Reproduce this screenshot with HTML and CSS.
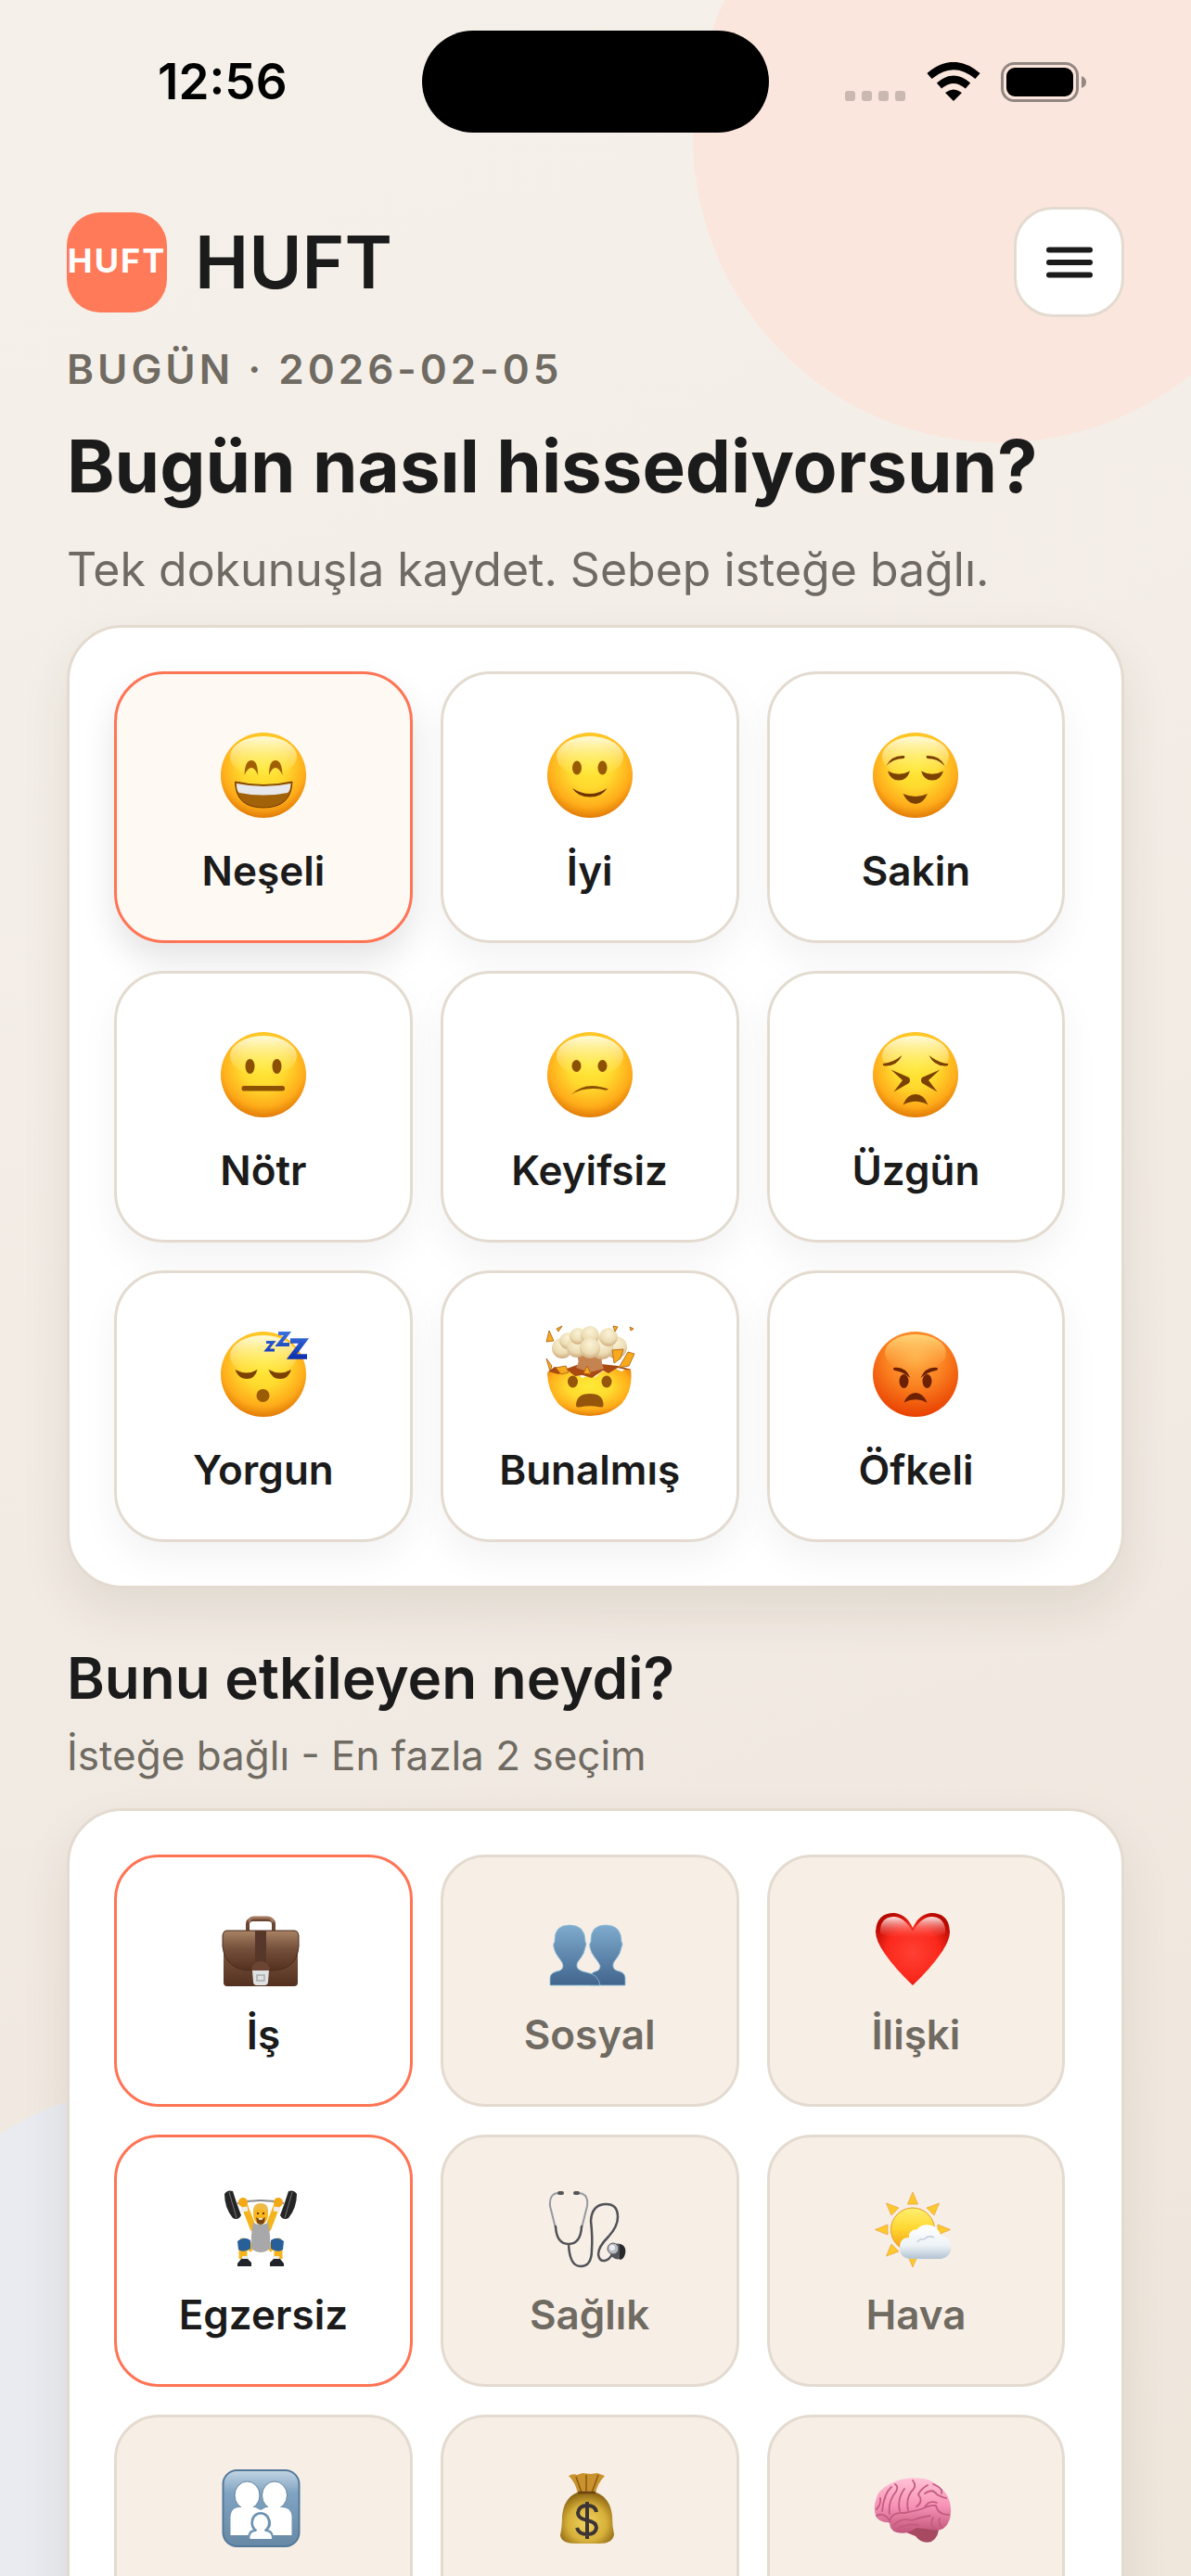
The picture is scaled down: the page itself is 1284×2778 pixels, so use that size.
FILE: index.html
```html
<!DOCTYPE html>
<html lang="tr">
<head>
<meta charset="utf-8">
<meta name="viewport" content="width=device-width, initial-scale=1">
<title>HUFT</title>
<link rel="stylesheet" href="styles.css">
</head>
<body>
<svg class="defs" aria-hidden="true">
  <defs>
    <radialGradient id="skin" cx=".5" cy=".38" r=".63">
      <stop offset="0" stop-color="#ffe936"/><stop offset=".42" stop-color="#ffda2e"/><stop offset=".78" stop-color="#ffac1a"/><stop offset="1" stop-color="#df7806"/>
    </radialGradient>
    <radialGradient id="rage" cx=".5" cy=".3" r=".72">
      <stop offset="0" stop-color="#ffae45"/><stop offset=".5" stop-color="#fa7f1f"/><stop offset="1" stop-color="#e83c00"/>
    </radialGradient>
    <linearGradient id="shine" x1="0" y1="0" x2="0" y2="1">
      <stop offset="0" stop-color="#fffde6" stop-opacity=".95"/><stop offset="1" stop-color="#fff27a" stop-opacity="0"/>
    </linearGradient>
    <linearGradient id="rageshine" x1="0" y1="0" x2="0" y2="1">
      <stop offset="0" stop-color="#ffdf80" stop-opacity=".9"/><stop offset="1" stop-color="#ffb050" stop-opacity="0"/>
    </linearGradient>
    <linearGradient id="zed" x1="0" y1="0" x2="0" y2="32" gradientUnits="userSpaceOnUse">
      <stop offset="0" stop-color="#3f78e0"/><stop offset="1" stop-color="#0a2cb0"/>
    </linearGradient>
    <radialGradient id="smoke" cx=".5" cy=".3" r=".75">
      <stop offset="0" stop-color="#fbf3d6"/><stop offset=".6" stop-color="#ecdcb4"/><stop offset="1" stop-color="#c9a070"/>
    </radialGradient>
    <linearGradient id="leather" x1="0" y1="0" x2="0" y2="1">
      <stop offset="0" stop-color="#a98364"/><stop offset=".45" stop-color="#75503b"/><stop offset="1" stop-color="#53301f"/>
    </linearGradient>
    <linearGradient id="bust" x1="0" y1="0" x2="0" y2="1">
      <stop offset="0" stop-color="#7fabce"/><stop offset="1" stop-color="#41648c"/>
    </linearGradient>
    <radialGradient id="heart" cx=".5" cy=".55" r=".6">
      <stop offset="0" stop-color="#ff4034"/><stop offset=".6" stop-color="#fb281c"/><stop offset="1" stop-color="#b80800"/>
    </radialGradient>
    <linearGradient id="heartshine" x1="0" y1="0" x2="0" y2="1">
      <stop offset="0" stop-color="#fff" stop-opacity=".9"/><stop offset="1" stop-color="#ff6a60" stop-opacity="0"/>
    </linearGradient>
    <linearGradient id="sun" x1="0" y1="0" x2="0" y2="1">
      <stop offset="0" stop-color="#ffef70"/><stop offset=".45" stop-color="#ffd934"/><stop offset="1" stop-color="#f79a10"/>
    </linearGradient>
    <linearGradient id="cloud" x1="0" y1="0" x2="0" y2="1">
      <stop offset="0" stop-color="#fff"/><stop offset=".6" stop-color="#eef3f7"/><stop offset="1" stop-color="#b3c3d2"/>
    </linearGradient>
    <linearGradient id="sign" x1="0" y1="0" x2="0" y2="1">
      <stop offset="0" stop-color="#c3d5e3"/><stop offset=".3" stop-color="#7fa3c2"/><stop offset="1" stop-color="#6889a5"/>
    </linearGradient>
    <radialGradient id="sack" cx=".5" cy=".6" r=".6">
      <stop offset="0" stop-color="#f0d45c"/><stop offset=".6" stop-color="#d6b03a"/><stop offset="1" stop-color="#8d6512"/>
    </radialGradient>
    <linearGradient id="brain" x1="0" y1="0" x2="0" y2="1">
      <stop offset="0" stop-color="#ffc3d6"/><stop offset=".5" stop-color="#f793b6"/><stop offset="1" stop-color="#c0567a"/>
    </linearGradient>
    <g id="face">
      <circle cx="48" cy="48" r="46" fill="url(#skin)"/>
      <ellipse cx="48" cy="28" rx="36" ry="22" fill="url(#shine)"/>
    </g>
  </defs>
</svg>

<div class="screen">
  <div class="blob blob-peach"></div>
  <div class="blob blob-blue"></div>

  <div class="statusbar">
    <span class="clock">12:56</span>
    <span class="island"></span>
    <span class="indicators">
      <svg width="66" height="43" viewBox="0 0 66 43" fill="#c9b9b1" aria-hidden="true"><rect y="31" width="11" height="11" rx="3"/><rect x="18" y="31" width="11" height="11" rx="3"/><rect x="36" y="31" width="11" height="11" rx="3"/><rect x="54" y="31" width="11" height="11" rx="3"/></svg>
      <svg width="58" height="43" viewBox="0 0 58 43" aria-hidden="true"><path d="M29 42 20 33Q29 26 38 33Z"/><path d="M13.500 25.500Q29 12 44.500 25.500" fill="none" stroke="#000" stroke-width="8"/><path d="M3 15Q29-7 55 15" fill="none" stroke="#000" stroke-width="8"/></svg>
      <svg width="92" height="43" viewBox="0 0 92 43" aria-hidden="true"><rect x="1.500" y="1.500" width="81" height="40" rx="13" fill="none" stroke="#938782" stroke-width="3"/><rect x="6" y="6" width="72" height="31" rx="9"/><path d="M87 15q5 2 5 6.500T87 28z" fill="#938782"/></svg>
    </span>
  </div>

  <main class="page">
    <header class="topbar">
      <span class="logo">HUFT</span>
      <span class="brand">HUFT</span>
      <button class="menu" type="button" aria-label="Menü">
        <svg width="50" height="36" viewBox="0 0 50 36" stroke="#1b1b1b" stroke-width="6" stroke-linecap="round" aria-hidden="true"><path d="M3 4.500h44M3 18h44M3 31.500h44"/></svg>
      </button>
    </header>
    <p class="eyebrow">BUGÜN · 2026-02-05</p>
    <h1>Bugün nasıl hissediyorsun?</h1>
    <p class="lead">Tek dokunuşla kaydet. Sebep isteğe bağlı.</p>

    <section class="card moods">
      <button class="tile selected" type="button" aria-pressed="true">
        <svg viewBox="0 0 96 96" aria-hidden="true"><use href="#face"/><path d="M27.500 48Q28 32 35 32T42 48Q39 40 35 40T27.500 48ZM54 48Q54 32 61 32T68.500 48Q65 40 61 40T54 48Z" fill="#a05f05"/><path d="M17.500 55Q48 62 79 55Q78 83 48 83T17.500 55Z" fill="#a2620a" stroke="#6d3600" stroke-width="1"/><path d="M19 57Q48 63 77.500 57Q77 65 74 67Q48 72 22 67Q19 65 19 57Z" fill="#e6e8ec"/></svg>
        <span>Neşeli</span>
      </button>
      <button class="tile" type="button" aria-pressed="false">
        <svg viewBox="0 0 96 96" aria-hidden="true"><use href="#face"/><g fill="#985a05"><ellipse cx="34" cy="40" rx="5" ry="7.500"/><ellipse cx="61.500" cy="40" rx="5" ry="7.500"/></g><path d="M29 62Q48 74 66.500 62Q61 71.500 48 71.500T29 62Z" fill="#6f3600"/></svg>
        <span>İyi</span>
      </button>
      <button class="tile" type="button" aria-pressed="false">
        <svg viewBox="0 0 96 96" aria-hidden="true"><use href="#face"/><g fill="#7b4103"><path d="M16.500 38Q22 26 36 27Q37 29 35 30Q24 30 16.500 38ZM79.500 38Q74 26 60 27Q59 29 61 30Q72 30 79.500 38Z"/><path d="M18 43.500Q30 50 42 43.500Q39 53.500 30 53.500T18 43.500ZM54 43.500Q66 50 78 43.500Q75 53.500 66 53.500T54 43.500ZM34.500 68Q48 74 61 68Q56 79 48 79T34.500 68Z"/></g></svg>
        <span>Sakin</span>
      </button>
      <button class="tile" type="button" aria-pressed="false">
        <svg viewBox="0 0 96 96" aria-hidden="true"><use href="#face"/><g fill="#8c5003"><ellipse cx="33.500" cy="39" rx="5" ry="8"/><ellipse cx="62.500" cy="39" rx="5" ry="8"/><rect x="24.500" y="60" width="46.500" height="5.500" rx="2.500"/></g></svg>
        <span>Nötr</span>
      </button>
      <button class="tile" type="button" aria-pressed="false">
        <svg viewBox="0 0 96 96" aria-hidden="true"><use href="#face"/><g fill="#8c5003"><ellipse cx="33.500" cy="38.500" rx="5" ry="6.500"/><ellipse cx="61.500" cy="38.500" rx="5" ry="6.500"/><path d="M27.500 69.500Q43 54 68 63.500Q67 65 64 64.500Q43 60 27.500 69.500Z"/></g></svg>
        <span>Keyifsiz</span>
      </button>
      <button class="tile" type="button" aria-pressed="false">
        <svg viewBox="0 0 96 96" aria-hidden="true"><use href="#face"/><g fill="#7b4103"><path d="M13 36Q24 35 33.500 27Q28 39 15 38.500Q12 38 13 36ZM83 36Q72 35 62.500 27Q68 39 81 38.500Q84 38 83 36Z"/><path d="M21.500 42.500 41 51Q43 54 41 57L24.500 66.500 34 54ZM74.500 42.500 55 51Q53 54 55 57L71.500 66.500 62 54Z"/><path d="M34.500 80.500Q39 69 48 69T61.500 80.500Q48 73 34.500 80.500Z"/></g></svg>
        <span>Üzgün</span>
      </button>
      <button class="tile" type="button" aria-pressed="false">
        <svg viewBox="0 0 96 96" aria-hidden="true"><use href="#face"/><g fill="#7b4103"><path d="M17.500 43Q30 50 41.500 43Q39 53 30 53T17.500 43ZM53.500 43Q66 50 78 43Q75 53 66 53T53.500 43Z"/><ellipse cx="47.500" cy="71" rx="7" ry="7" fill="#9a5c07"/></g><g fill="none" stroke="url(#zed)"><path d="M51 13.500h7.500l-7 8.500H60" stroke-width="3"/><path d="M64 4h10L64.500 16H76" stroke-width="4"/><path d="M77 12h14.500L78.500 29H95" stroke-width="5.500"/></g></svg>
        <span>Yorgun</span>
      </button>
      <button class="tile" type="button" aria-pressed="false">
        <svg viewBox="0 0 96 96" aria-hidden="true"><path d="M2 46 8 43l5 3 6-5 7 5 8 2 6 4 7-3 7 2 7-6 8 1 7-4 6 3 6-3 4 1Q95 65 82 80Q68 93 48 93T14 80Q2 65 2 46Z" fill="url(#skin)"/><path d="M3 45 10 40 20 43 34 38 48 42 60 37 78 39 93 43 86 43 78 41 68 47 62 44 50 52 40 49 32 50 24 44 14 48Z" fill="#a84a12"/><path d="M33 25H62Q59 34 63 42L48 46 33 41Q38 34 33 25Z" fill="#c58350"/><g fill="url(#smoke)"><circle cx="76" cy="19" r="12"/><circle cx="18" cy="20" r="11"/><circle cx="24" cy="12" r="9"/><circle cx="34" cy="19" r="11"/><circle cx="61" cy="20" r="12"/><circle cx="68" cy="8" r="10"/><circle cx="35" cy="7" r="9"/><circle cx="48" cy="6" r="10"/><circle cx="48" cy="20" r="11"/></g><g fill="#f6aa1c" stroke="#ad5b0d" stroke-width=".8"><path d="M4 1 9 12 1 13ZM12-1 18-4 14 2ZM72 22 84 21 81 31 74 36ZM89 24 96 26 90 39 79 41ZM1 31 7 39 5 45ZM11 41 22 39 25 46 17 48ZM41 47 45 39 49 48ZM73-4 78-3 75 2ZM91-3 95-1 92 1Z"/></g><g fill="#95550b"><ellipse cx="29.500" cy="56" rx="5.500" ry="6.500"/><ellipse cx="66" cy="56" rx="5.500" ry="6.500"/><path d="M33 82Q33 69 48 69T62.500 82Q62 84 59 83.500Q48 81 37 83.500Q33 84 33 82Z"/></g></svg>
        <span>Bunalmış</span>
      </button>
      <button class="tile" type="button" aria-pressed="false">
        <svg viewBox="0 0 96 96" aria-hidden="true"><circle cx="48" cy="48" r="46" fill="url(#rage)"/><ellipse cx="48" cy="25" rx="33" ry="20" fill="url(#rageshine)"/><g fill="#6d2003"><path d="M24.500 41Q37 39 42.500 52Q34 45 26 44Q23 43 24.500 41ZM71.500 41Q59 39 53.500 52Q62 45 70 44Q73 43 71.500 41Z"/><ellipse cx="35.500" cy="55.500" rx="5" ry="7.500"/><ellipse cx="60.500" cy="55.500" rx="5" ry="7.500"/><path d="M35.500 78.500Q40 68 48 68T60.500 78.500Q48 72 35.500 78.500Z"/></g></svg>
        <span>Öfkeli</span>
      </button>
    </section>

    <section class="reasons">
      <h2>Bunu etkileyen neydi?</h2>
      <p class="hint">İsteğe bağlı - En fazla 2 seçim</p>
      <div class="card">
        <button class="tile selected" type="button" aria-pressed="true">
          <svg viewBox="0 0 84 84" aria-hidden="true"><path d="M25 23V16Q25 11 31 11H47Q53 11 53 16V23" fill="none" stroke="#6a4533" stroke-width="4"/><path d="M27 14Q26 9 32 9H46Q52 9 52 14" fill="none" stroke="#a2785d" stroke-width="3"/><rect x="-1" y="23" width="80" height="60" rx="4" fill="url(#leather)"/><path d="M-2 40Q1 66 30 66H50Q78 66 80 40V28Q79 23 76 23H2Q-1 23-2 28Z" fill="url(#leather)" stroke="#4b2b1d" stroke-width="1"/><path d="M33 23h12v38H33z" fill="#56372a"/><path d="M29 66Q30 56 39 56T49 66Z" fill="#6b4433"/><path d="M30 66h18l-1 12q0 4-4 4h-8q-4 0-4-4Z" fill="#dfe1e2"/><path d="M35 71h8v6h-8z" fill="none" stroke="#a9abad" stroke-width="1.500"/></svg>
          <span>İş</span>
        </button>
        <button class="tile" type="button" aria-pressed="false">
          <svg viewBox="0 0 84 84" aria-hidden="true"><g fill="url(#bust)" stroke="#8fc0dc" stroke-width=".8"><path d="M42 82V74Q42 69 48 67Q53 66 53 61Q52 58 48 53Q43 47 42 41Q41 37 43 35Q42 17 59 17T76 35Q78 37 76 41Q75 48 70 54Q66 58 67 62Q68 66 74 67Q80 69 80 74V82Z"/><path d="M-1 82V74Q-1 69 6 67Q13 66 13 61Q13 58 9 53Q4 47 3 41Q2 37 4 35Q3 17 20 17T37 35Q39 37 37 41Q36 48 31 54Q27 58 28 62Q29 66 38 68Q51 70 53 82Z"/></g></svg>
          <span>Sosyal</span>
        </button>
        <button class="tile" type="button" aria-pressed="false">
          <svg viewBox="0 0 84 84" aria-hidden="true"><path d="M39 82Q20 64 9 48Q-1 34-1 24Q0 4 19 4Q32 5 39 20Q46 5 59 4Q78 4 79 24Q79 34 69 48Q58 64 39 82Z" fill="url(#heart)"/><path d="M4 26Q3 9 18 8Q30 8 39 24Q48 8 60 8Q75 9 74 26Q57 33 39 30Q21 33 4 26Z" fill="url(#heartshine)"/></svg>
          <span>İlişki</span>
        </button>
        <button class="tile selected" type="button" aria-pressed="true">
          <svg viewBox="0 0 84 84" aria-hidden="true"><path d="M14 15Q39 9 64 15" fill="none" stroke="#8b8b8b" stroke-width="2"/><g fill="#252525"><path d="M0 5Q3 0 9 2Q13 15 18 28Q15 34 9 31Q0 20 0 5ZM78 5Q75 0 69 2Q65 15 60 28Q63 34 69 31Q78 20 78 5Z"/></g><path d="M5 3 13 31M73 3 65 31" stroke="#777" stroke-width="1"/><path d="M21 16 31 42M57 16 47 42" stroke="#f6b41c" stroke-width="7" stroke-linecap="round"/><path d="M18 22 25 21M53 21 60 22" stroke="#eee" stroke-width="5"/><circle cx="20" cy="14" r="5" fill="#f2a915"/><circle cx="58" cy="14" r="5" fill="#f2a915"/><path d="M31 64 20 57 20 75M47 64 58 57 58 75" fill="none" stroke="#f6b41c" stroke-width="9" stroke-linejoin="round"/><path d="M31 36Q39 40 47 36Q50 50 49 64Q39 72 29 64Q28 50 31 36Z" fill="#a8a8aa"/><ellipse cx="39" cy="27" rx="8" ry="11" fill="#f8b51c"/><path d="M31 26Q30 15 39 15T47 26Q44 22 37 21Q32 22 31 26Z" fill="#eebb47"/><path d="M34 30Q39 34 44 30L43 36Q39 40 35 36Z" fill="#7a4512"/><path d="M37 32h4" stroke="#fff" stroke-width="1.500"/><path d="M35 26h2M41 26h2" stroke="#603708" stroke-width="2"/><path d="M14 56Q21 50 28 55L28 64Q20 69 15 65ZM64 56Q57 50 50 55L50 64Q58 69 63 65Z" fill="#285f99"/><path d="M19 72h7v4h-7zM52 72h7v4h-7z" fill="#eee"/><path d="M18 75h7l4 4v4H14v-3ZM60 75h-7l-4 4v4h15v-3Z" fill="#202329"/></svg>
          <span>Egzersiz</span>
        </button>
        <button class="tile" type="button" aria-pressed="false">
          <svg viewBox="0 0 84 84" fill="none" stroke-linecap="round" aria-hidden="true"><path d="M10 4Q-2 3-1 18L5 42M27 4Q41 3 39 18L33 42" stroke="#9699a2" stroke-width="2"/><path d="M5 40Q6 59 19 59T33 40M19 59Q20 83 32 83T44 65Q45 52 43 34Q44 17 58 16T72 30Q72 40 62 51Q51 62 51 70Q52 78 58 77Q63 76 66 70" stroke="#505258" stroke-width="2.500"/><path d="M9 4h3M26 4h3" stroke="#555" stroke-width="4"/><circle cx="72" cy="67" r="8.500" fill="#55565c"/><path d="M74 59Q81 60 80 68T74 76" fill="#28292d"/><circle cx="67" cy="64" r="6" fill="#b7bac0" stroke="#55565c"/><circle cx="66" cy="63" r="3" fill="#eceef1"/></svg>
          <span>Sağlık</span>
        </button>
        <button class="tile" type="button" aria-pressed="false">
          <svg viewBox="0 0 84 84" aria-hidden="true"><g fill="#fdc92c" stroke="#eda540" stroke-width=".8"><path d="M39 3 44.500 16H33.500ZM39 84 44.500 71H33.500ZM-1.500 43.500 12 38V49ZM79.500 43.500 66 38V49ZM10.500 15 24 20 16 28ZM67.500 15 54 20 62 28ZM10.500 72 24 67 16 59Z"/></g><circle cx="39" cy="43.500" r="23.500" fill="url(#sun)" stroke="#e99a26" stroke-width="1"/><path d="M36 75Q25 74 25 63T35 52Q34 44 44 43Q48 37 57 38.500Q67 40 69 50Q80 51 80.500 62T69 75Z" fill="url(#cloud)"/><path d="M44 57Q46 53 51 54Q56 49 62 52" fill="none" stroke="#c6d1dc" stroke-width="1.500"/></svg>
          <span>Hava</span>
        </button>
        <button class="tile" type="button" aria-pressed="false" aria-label="Aile">
          <svg viewBox="0 0 84 84" aria-hidden="true"><rect x="-1.500" y="1" width="82" height="82" rx="15" fill="url(#sign)" stroke="#54789a" stroke-width="2"/><g fill="#fff" stroke="#65839d" stroke-width="1"><ellipse cx="24.500" cy="28" rx="13.500" ry="15"/><ellipse cx="54" cy="28" rx="13.500" ry="15"/><path d="M6.500 71V51Q7 41 16 41H33L39 44 45 41H62Q72 41 72.500 51V71Z" stroke="none"/><path d="M18 38h13v6H18zM47 38h13v6H47z" stroke="none"/></g><path d="M25 75Q25 66 31 65Q27 61 29 53Q32 46 39 46T49 53Q52 61 47 65Q53 66 53 75Z" fill="#6f93b1"/><ellipse cx="39" cy="57.500" rx="8" ry="9" fill="#fff"/><path d="M27.500 75Q27 67 34 67L36 64H42L44 67Q51 67 51 75Z" fill="#fff"/></svg>
        </button>
        <button class="tile" type="button" aria-pressed="false" aria-label="Para">
          <svg viewBox="0 0 84 84" aria-hidden="true"><path d="M19 7Q24 4 28 6L34 4 43 5 50 4 58 7Q50 15 48 26H29Q26 13 19 7Z" fill="#c9922c"/><path d="M27 8 33 25M38 6V25M51 6 44 25" stroke="#8a5a12" stroke-width="1.500"/><path d="M28 25H49Q64 31 66 50Q66 61 68 70Q67 80 52 80H27Q11 80 10 71Q12 62 12 50Q14 31 28 25Z" fill="url(#sack)"/><path d="M29 25H48" stroke="#6b4210" stroke-width="2.500"/><path d="M49 46Q48 39 39 39T29 47Q29 53 39 55T49 63Q48 70 39 70T28 63M39 35V75" fill="none" stroke="#3d3436" stroke-width="4"/></svg>
        </button>
        <button class="tile" type="button" aria-pressed="false" aria-label="Zihin">
          <svg viewBox="0 0 84 84" aria-hidden="true"><path d="M39 62 67 60Q68 73 59 78Q49 81 42 72L32 68Z" fill="#a84962"/><path d="M0 52Q-4 44-1 34Q1 22 14 16Q28 8 44 9.500Q58 9 68 19Q79 27 80 42Q81 56 73 63Q68 67 61 65L43 63Q32 71 22 68Q14 66 14 57Q5 58 0 52Z" fill="url(#brain)"/><path d="M0 43Q5 38 4 31M6 45Q8 26 16 19M14 48Q12 35 21 24Q24 18 20 16M25 45Q22 32 30 21M34 44Q31 30 40 21Q43 17 39 12M43 40Q51 35 45 27Q48 21 55 17M52 41Q56 33 65 36M52 26Q60 20 65 27Q70 30 75 31M14 57Q15 46 30 47Q40 45 48 43Q58 38 64 39Q66 49 78 49M19 60Q26 52 38 55Q49 51 58 50M23 64Q33 58 45 60M61 52Q56 62 64 64M68 53Q66 59 71 63M0 50Q8 46 14 55M61 16Q72 20 70 26" fill="none" stroke="#c35c80" stroke-width="1.800" stroke-linecap="round"/></svg>
        </button>
      </div>
    </section>
  </main>
</div>
</body>
</html>
```
FILE: styles.css
```css
* {
  box-sizing: border-box;
}

body {
  margin: 0;
  color: #1b1b1b;
  font-family: Inter, "Liberation Sans", sans-serif;
}

h1, h2, p {
  margin: 0;
}

button {
  font: inherit;
  color: inherit;
  cursor: pointer;
}

.defs {
  position: absolute;
  width: 0;
  height: 0;
}

.screen {
  position: relative;
  height: 100vh;
  overflow: hidden;
  background: linear-gradient(160deg, #f5f1ea 0%, #f2ece5 45%, #efe6dc 100%);
}

.blob {
  position: absolute;
  width: 660px;
  height: 660px;
  border-radius: 50%;
}

.blob-peach {
  top: -183px;
  right: -123px;
  background: #fbe6dd;
}

.blob-blue {
  top: 2248px;
  left: -150px;
  background: #e9ebf0;
}

.statusbar {
  position: relative;
  display: grid;
  grid-template-columns: 1fr auto 1fr;
  align-items: center;
  padding-top: 33px;
  color: #000;
}

.clock {
  padding-left: 170px;
  font-size: 53px;
  font-weight: 600;
  line-height: 60px;
}

.island {
  width: 374px;
  height: 110px;
  border-radius: 55px;
  background: #000;
}

.indicators {
  display: flex;
  justify-content: flex-end;
  gap: 22px;
  padding-right: 113px;
}

.page {
  position: relative;
  display: flex;
  flex-direction: column;
  gap: 32px;
  padding: 80px 72px 48px;
}

.topbar {
  display: flex;
  align-items: center;
  gap: 30px;
}

.logo {
  display: flex;
  align-items: center;
  justify-content: center;
  width: 108px;
  height: 108px;
  padding-bottom: 3px;
  border-radius: 36px;
  background: #ff7a59;
  color: #fff;
  font-size: 36px;
  font-weight: 700;
  letter-spacing: 2px;
}

.brand {
  font-size: 78px;
  font-weight: 600;
  line-height: 96px;
}

.menu {
  display: flex;
  align-items: center;
  justify-content: center;
  width: 119px;
  height: 119px;
  margin-left: auto;
  padding: 0;
  border: 3px solid #e4dbd0;
  border-radius: 42px;
  background: #fff;
}

.eyebrow {
  color: #6f6a62;
  font-size: 44px;
  font-weight: 600;
  line-height: 48px;
  letter-spacing: 4px;
}

h1 {
  font-size: 78px;
  font-weight: 700;
  line-height: 98px;
  white-space: nowrap;
}

.lead {
  color: #6f6a62;
  font-size: 50px;
  line-height: 60px;
}

.card {
  display: grid;
  grid-template-columns: repeat(3, 31%);
  gap: 30px;
  padding: 47px 48px;
  border: 3px solid #e4dbd0;
  border-radius: 60px;
  background: #fff;
  box-shadow: 0 24px 54px rgba(60, 45, 25, 0.09);
}

.tile {
  display: flex;
  flex-direction: column;
  align-items: center;
  padding: 0;
  border: 3px solid #e4dbd0;
  font-size: 44px;
  font-weight: 600;
  line-height: 54px;
}

.tile svg {
  overflow: visible;
}

.tile.selected {
  border-color: #ff7455;
}

.moods {
  margin-top: -2px;
}

.moods .tile {
  gap: 28px;
  height: 293px;
  padding-top: 61px;
  border-radius: 54px;
  background: #fff;
  box-shadow: 0 18px 42px rgba(0, 0, 0, 0.05);
}

.moods .tile svg {
  width: 96px;
  height: 96px;
}

.moods .tile.selected {
  background: #fff9f3;
  box-shadow: 0 18px 36px rgba(0, 0, 0, 0.11);
}

.reasons {
  padding-top: 29px;
}

h2 {
  font-size: 62px;
  font-weight: 600;
  line-height: 72px;
}

.hint {
  margin: 20px 0 30px;
  color: #6f6a62;
  font-size: 44px;
  line-height: 54px;
}

.reasons .tile {
  gap: 24px;
  height: 272px;
  padding-top: 56px;
  border-radius: 48px;
  background: #f7eee5;
  color: #6f6a62;
}

.reasons .tile svg {
  width: 84px;
  height: 84px;
}

.reasons .tile.selected {
  background: #fff;
  color: #1b1b1b;
}
```
